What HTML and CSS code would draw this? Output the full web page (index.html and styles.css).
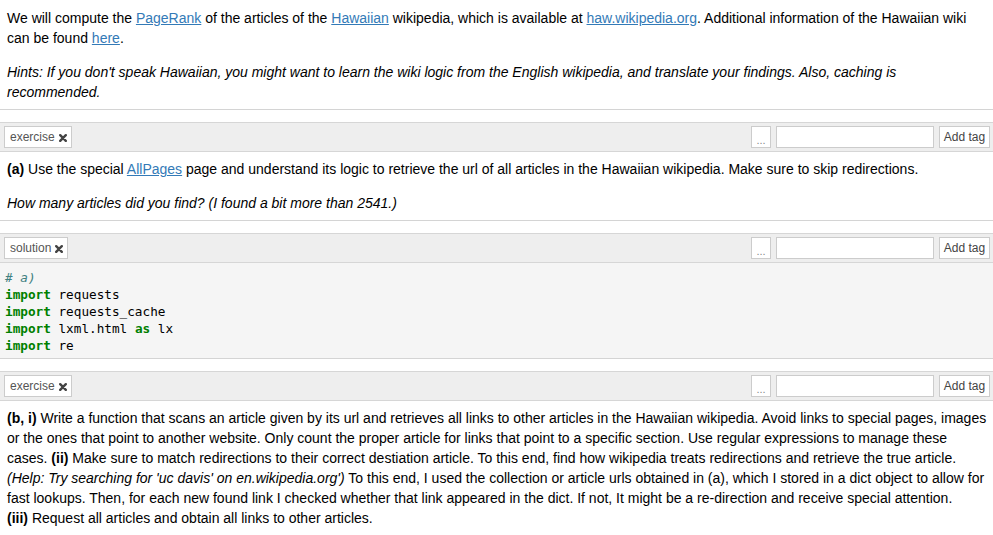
FILE: index.html
```html
<!DOCTYPE html>
<html lang="en">
<head>
<meta charset="utf-8">
<title>Hawaiian PageRank</title>
<link rel="stylesheet" href="styles.css">
</head>
<body>
<div class="notebook">

  <div class="cell md first">
    <div class="content">
      <p>We will compute the <a href="#">PageRank</a> of the articles of the <a href="#">Hawaiian</a> wikipedia, which is available at <a href="#">haw.wikipedia.org</a>. Additional information of the Hawaiian wiki can be found <a href="#">here</a>.</p>
      <p><em>Hints: If you don't speak Hawaiian, you might want to learn the wiki logic from the English wikipedia, and translate your findings. Also, caching is recommended.</em></p>
    </div>
  </div>

  <div class="cell md">
    <div class="tagbar">
      <div class="tags">
        <span class="tag">exercise <svg class="x" viewBox="0 0 8 8" width="8" height="8"><path d="M1.2 1.2 L6.8 6.8 M6.8 1.2 L1.2 6.8"/></svg></span>
      </div>
      <div class="tag-controls">
        <button class="more" type="button">...</button>
        <input class="tag-input" type="text">
        <button class="add" type="button">Add tag</button>
      </div>
    </div>
    <div class="content">
      <p><b>(a)</b> Use the special <a href="#">AllPages</a> page and understand its logic to retrieve the url of all articles in the Hawaiian wikipedia. Make sure to skip redirections.</p>
      <p><em>How many articles did you find? (I found a bit more than 2541.)</em></p>
    </div>
  </div>

  <div class="cell code-cell">
    <div class="tagbar">
      <div class="tags">
        <span class="tag">solution <svg class="x" viewBox="0 0 8 8" width="8" height="8"><path d="M1.2 1.2 L6.8 6.8 M6.8 1.2 L1.2 6.8"/></svg></span>
      </div>
      <div class="tag-controls">
        <button class="more" type="button">...</button>
        <input class="tag-input" type="text">
        <button class="add" type="button">Add tag</button>
      </div>
    </div>
<pre class="code"><span class="cm"># a)</span>
<span class="kw">import</span> requests
<span class="kw">import</span> requests_cache
<span class="kw">import</span> lxml.html <span class="kw">as</span> lx
<span class="kw">import</span> re</pre>
  </div>

  <div class="cell md">
    <div class="tagbar">
      <div class="tags">
        <span class="tag">exercise <svg class="x" viewBox="0 0 8 8" width="8" height="8"><path d="M1.2 1.2 L6.8 6.8 M6.8 1.2 L1.2 6.8"/></svg></span>
      </div>
      <div class="tag-controls">
        <button class="more" type="button">...</button>
        <input class="tag-input" type="text">
        <button class="add" type="button">Add tag</button>
      </div>
    </div>
    <div class="content">
      <p><b>(b, i)</b> Write a function that scans an article given by its url and retrieves all links to other articles in the Hawaiian wikipedia. Avoid links to special pages, images or the ones that point to another website. Only count the proper article for links that point to a specific section. Use regular expressions to manage these cases. <b>(ii)</b> Make sure to match redirections to their correct destiation article. To this end, find how wikipedia treats redirections and retrieve the true article. <em>(Help: Try searching for 'uc davis' on en.wikipedia.org')</em> To this end, I used the collection or article urls obtained in (a), which I stored in a dict object to allow for fast lookups. Then, for each new found link I checked whether that link appeared in the dict. If not, It might be a re-direction and receive special attention. <br><b>(iii)</b> Request all articles and obtain all links to other articles.</p>
    </div>
  </div>

</div>
</body>
</html>
```

FILE: styles.css
```css
html, body {
  margin: 0;
  padding: 0;
  background: #fff;
}

body {
  font-family: "Liberation Sans", Arial, sans-serif;
  font-size: 14px;
  line-height: 20px;
  color: #000;
}

.notebook {
  width: 993px;
}

.cell {
  border-bottom: 1px solid #d4d4d4;
  margin-bottom: 12px;
}

.content {
  padding: 7px 2px 7px 7px;
}

.cell.first .content {
  padding-top: 8px;
}

.content p {
  margin: 0;
}

.content p + p {
  margin-top: 14px;
}

a {
  color: #337ab7;
  text-decoration: underline;
}

/* tag toolbar */
.tagbar {
  display: flex;
  justify-content: space-between;
  align-items: center;
  background: #eeeeee;
  border-top: 1px solid #d6d6d6;
  border-bottom: 1px solid #d6d6d6;
  padding: 3px 3px 3px 4px;
  height: 22px;
}

.tags {
  display: flex;
  gap: 4px;
}

.tag {
  display: inline-flex;
  align-items: center;
  box-sizing: border-box;
  height: 22px;
  padding: 0 4px 0 5px;
  background: #fff;
  border: 1px solid #cccccc;
  font-size: 12px;
  line-height: 20px;
  color: #555;
}

.tag .x {
  margin-left: 4px;
  margin-top: 1px;
  fill: none;
  stroke: #444;
  stroke-width: 2.4;
  stroke-linecap: round;
}

.tag-controls {
  display: flex;
  gap: 5px;
  align-items: center;
}

.tag-controls button,
.tag-controls input {
  box-sizing: border-box;
  height: 22px;
  margin: 0;
  background: #fff;
  border: 1px solid #cccccc;
  border-radius: 0;
  font-family: "Liberation Sans", Arial, sans-serif;
  font-size: 12px;
  line-height: 20px;
  color: #444;
  outline: none;
}

.tag-controls .more {
  width: 20px;
  padding: 0;
  color: #888;
  line-height: 26px;
  font-size: 11px;
}

.tag-controls .tag-input {
  width: 158px;
  padding: 0 4px;
}

.tag-controls .add {
  width: 51px;
  padding: 0;
  color: #444;
}

/* code cell */
.code {
  margin: 0;
  padding: 6px 5px 4px 5px;
  background: #f5f5f5;
  font-family: "DejaVu Sans Mono", "Liberation Mono", monospace;
  font-size: 12.7px;
  line-height: 17px;
  color: #000;
}

.code .kw {
  color: #008000;
  font-weight: bold;
}

.code .cm {
  color: #408080;
  font-style: italic;
}
```
